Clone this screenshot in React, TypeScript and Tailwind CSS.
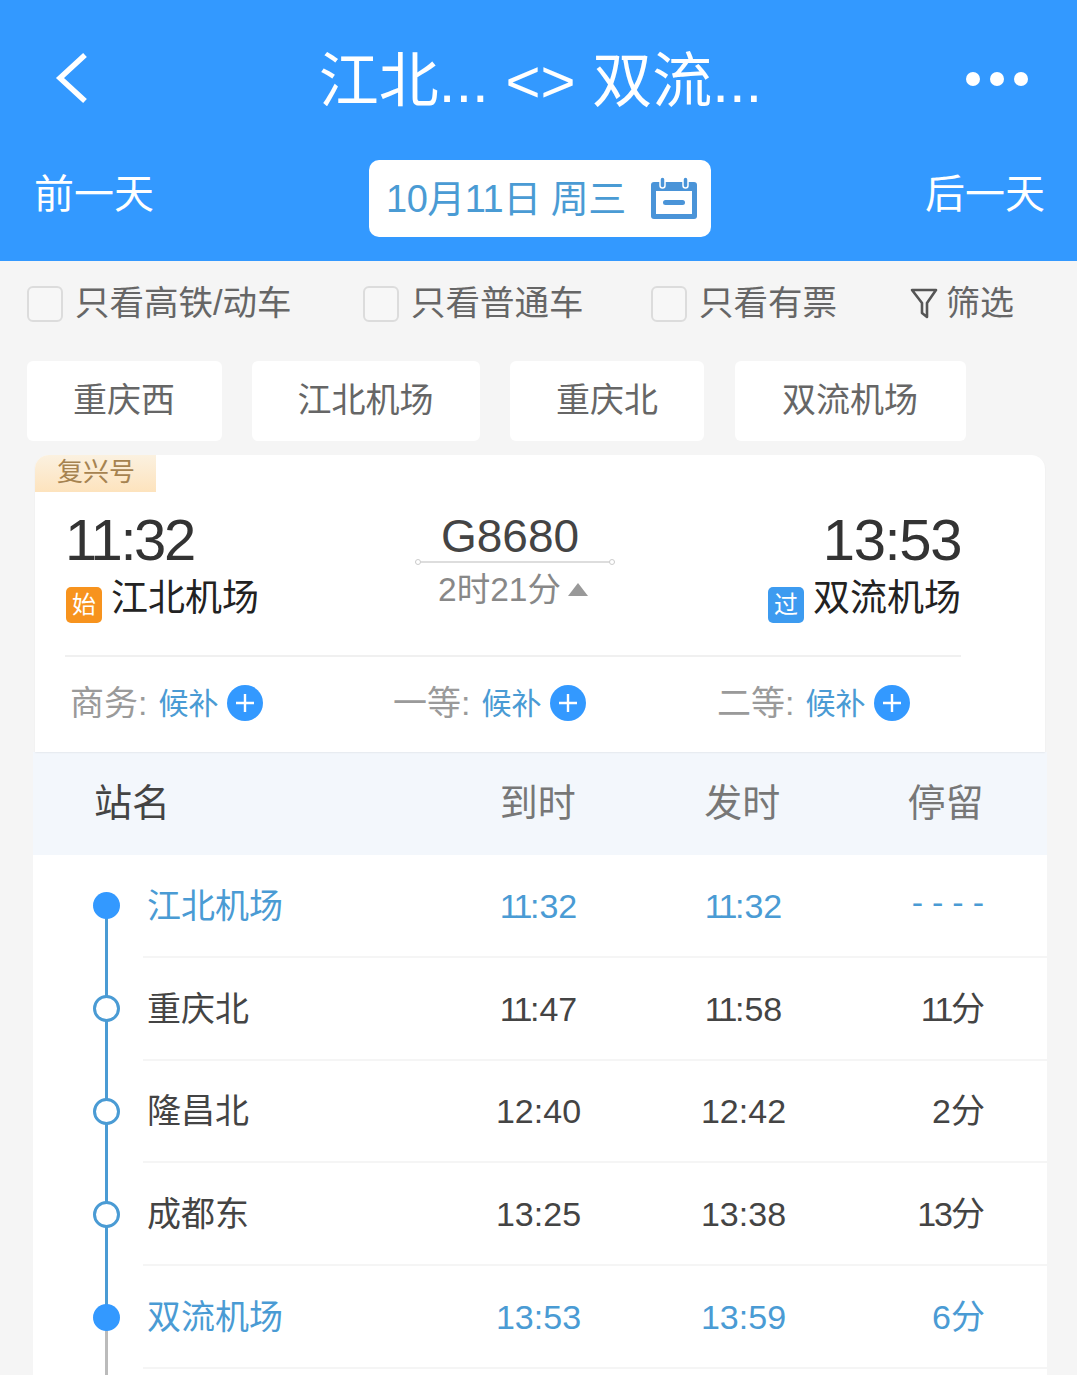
import React from "react";

const FONT = '"Liberation Sans", "Noto Sans CJK SC", sans-serif';

function Check({ label, className }: { label: string; className: string }) {
  return (
    <div className={`flex items-center gap-[12px] ${className}`}>
      <span className="w-[36px] h-[36px] rounded-[6px] border-2 border-[#dcdcdc] bg-[#f7f7f7]" />
      <span>{label}</span>
    </div>
  );
}

function Seat({ label, className }: { label: string; className: string }) {
  return (
    <div className={`flex items-center ${className}`}>
      <span className="text-[#9a9a9a]">{label}:</span>
      <span className="text-[#4a9bd4] text-[30px] ml-[11px]">候补</span>
      <span className="ml-[9px] w-[36px] h-[36px] rounded-full bg-[#3399ff] flex items-center justify-center">
        <svg width="20" height="20" viewBox="0 0 20 20" fill="none" stroke="#ffffff" strokeWidth="2.4">
          <path d="M10 1v18M1 10h18" />
        </svg>
      </span>
    </div>
  );
}

function Num({ v }: { v: string }) {
  if (v.startsWith("11")) {
    return (
      <>
        <span className="tracking-[-2.5px]">11</span>
        {v.slice(2)}
      </>
    );
  }
  if (v === "13分") {
    return (
      <>
        <span className="tracking-[-2px]">13</span>分
      </>
    );
  }
  return <>{v}</>;
}

const rows = [
  { name: "江北机场", a: "11:32", d: "11:32", s: "----", hi: true, filled: true },
  { name: "重庆北", a: "11:47", d: "11:58", s: "11分", hi: false, filled: false },
  { name: "隆昌北", a: "12:40", d: "12:42", s: "2分", hi: false, filled: false },
  { name: "成都东", a: "13:25", d: "13:38", s: "13分", hi: false, filled: false },
  { name: "双流机场", a: "13:53", d: "13:59", s: "6分", hi: true, filled: true },
];

export default function App() {
  return (
    <div className="w-[1077px] h-[1375px] overflow-hidden bg-[#f5f5f5]" style={{ fontFamily: FONT }}>
      {/* header */}
      <header className="h-[261px] bg-[#3399ff] text-white flex flex-col">
        <div className="h-[160px] flex items-center relative justify-center">
          <svg className="absolute left-[54px] top-[52px]" width="34" height="52" viewBox="0 0 34 52" fill="none" stroke="#ffffff" strokeWidth="5.5" strokeLinejoin="miter">
            <path d="M31 3 6 26l25 23" />
          </svg>
          <h1 className="text-[60px] font-normal leading-none pt-[4px] pl-[4px]">江北... &lt;&gt; 双流...</h1>
          <div className="absolute left-[966px] top-[72px] flex gap-[10px]">
            <span className="w-[14px] h-[14px] rounded-full bg-white" />
            <span className="w-[14px] h-[14px] rounded-full bg-white" />
            <span className="w-[14px] h-[14px] rounded-full bg-white" />
          </div>
        </div>
        <div className="flex items-start justify-between pl-[34px] pr-[32px]">
          <span className="text-[40px] leading-none mt-[14px]">前一天</span>
          <div className="w-[342px] h-[77px] rounded-[10px] bg-white flex items-center pl-[17px] mr-[-1px] text-[#4a9bd4] text-[38px]">
            <span className="whitespace-nowrap tracking-[-0.5px] mt-[1px]">10月11日 周三</span>
            <svg className="ml-[25px] mb-[2px]" width="46" height="44" viewBox="0 0 46 44" fill="none">
              <rect x="0" y="6" width="46" height="37" rx="3" fill="#4a94d8" />
              <rect x="5" y="15" width="36" height="23" fill="#ffffff" />
              <rect x="12" y="24" width="22" height="5" rx="2.5" fill="#4a94d8" />
              <rect x="9" y="1" width="5" height="11" rx="2.5" fill="#4a94d8" stroke="#ffffff" strokeWidth="1.5" />
              <rect x="32" y="1" width="5" height="11" rx="2.5" fill="#4a94d8" stroke="#ffffff" strokeWidth="1.5" />
            </svg>
          </div>
          <span className="text-[40px] leading-none mt-[14px]">后一天</span>
        </div>
      </header>

      {/* filters */}
      <div className="h-[84px] flex items-center pl-[27px] text-[34.5px] text-[#666666] pt-[1px]">
        <Check label="只看高铁/动车" className="w-[336px]" />
        <Check label="只看普通车" className="w-[288px]" />
        <Check label="只看有票" className="w-[259px]" />
        <div className="flex items-center gap-[8px] text-[34px]">
          <svg width="28" height="34" viewBox="0 0 28 34" fill="none" stroke="#555555" strokeWidth="2.6" strokeLinejoin="round">
            <path d="M2 3h24L17 16v14l-5-4V16z" />
          </svg>
          <span>筛选</span>
        </div>
      </div>

      {/* chips */}
      <div className="flex pl-[27px] mt-[16px] h-[80px] text-[34px] text-[#666666]">
        <div className="w-[195px] pb-[2px] pr-[1px] bg-white rounded-[6px] flex items-center justify-center">重庆西</div>
        <div className="w-[228px] pb-[2px] pr-[1px] ml-[30px] bg-white rounded-[6px] flex items-center justify-center">江北机场</div>
        <div className="w-[194px] pb-[2px] ml-[30px] bg-white rounded-[6px] flex items-center justify-center">重庆北</div>
        <div className="w-[231px] pb-[2px] pr-[1px] ml-[31px] bg-white rounded-[6px] flex items-center justify-center">双流机场</div>
      </div>

      {/* train card */}
      <section className="mt-[14px] ml-[35px] w-[1010px] h-[297px] bg-white rounded-t-[14px] relative overflow-hidden shadow-[0_1px_2px_rgba(0,0,0,0.06)]">
        <div className="absolute left-0 top-0 w-[121px] h-[37px] bg-gradient-to-b from-[#fbf1e0] to-[#fde3bd] text-[#a68350] text-[26px] leading-[35px] pl-[22px]">复兴号</div>
        <div className="pt-[53px] px-[30px] h-[202px]">
          <div className="flex justify-between items-start h-[149px] border-b-2 border-[#f0f0f0] w-[896px]">
            <div>
              <div className="text-[58px] leading-[64px] tracking-[-2.4px] text-[#333333]">11:32</div>
              <div className="flex items-center mt-[2px]">
                <span className="w-[36px] h-[36px] ml-[1px] mt-[12px] rounded-[5px] bg-[#f7931e] text-white text-[24px] flex items-center justify-center">始</span>
                <span className="ml-[9px] text-[37px] leading-[50px] text-[#222222]">江北机场</span>
              </div>
            </div>
            <div className="w-[200px] ml-[3px] flex flex-col items-center">
              <div className="text-[46px] leading-[49px] text-[#444444] mt-[4px] mr-[10px]">G8680</div>
              <div className="w-[200px] h-[2px] bg-[#dddddd] relative">
                <span className="absolute left-0 top-[-2px] w-[6px] h-[6px] rounded-full border border-[#cccccc] bg-white" />
                <span className="absolute right-0 top-[-2px] w-[6px] h-[6px] rounded-full border border-[#cccccc] bg-white" />
              </div>
              <div className="flex items-center text-[33.5px] leading-[52px] text-[#888888] mt-[1px] mr-[4px]">
                <span>2时21分</span>
                <span className="ml-[7px] mb-[2px] w-0 h-0 border-l-[10px] border-r-[10px] border-b-[13px] border-l-transparent border-r-transparent border-b-[#999999]" />
              </div>
            </div>
            <div className="flex flex-col items-end">
              <div className="text-[58px] leading-[64px] tracking-[-1.4px] text-[#333333]">13:53</div>
              <div className="flex items-center mt-[2px]">
                <span className="w-[36px] h-[36px] mt-[12px] rounded-[5px] bg-[#3d9bf0] text-white text-[24px] flex items-center justify-center">过</span>
                <span className="ml-[9px] text-[37px] leading-[50px] text-[#222222]">双流机场</span>
              </div>
            </div>
          </div>
        </div>
        <div className="flex items-center h-[92px] text-[34px]">
          <Seat label="商务" className="ml-[35px] w-[323px]" />
          <Seat label="一等" className="w-[324px]" />
          <Seat label="二等" className="" />
        </div>
      </section>

      {/* table */}
      <section className="ml-[33px] w-[1014px]">
        <div className="h-[103px] bg-[#f3f7fc] flex items-center text-[38px] text-[#777777]">
          <div className="w-[406px] pl-[61px] text-[#444444]">站名</div>
          <div className="w-[207px] text-center">到时</div>
          <div className="w-[206px] text-center">发时</div>
          <div className="w-[205px] text-center">停留</div>
        </div>
        <div className="bg-white">
          {rows.map((r, i) => (
            <div key={r.name} className="h-[102.8px] flex relative">
              <div className="w-[110px] shrink-0 relative flex items-center">
                <span
                  className={`absolute left-[72px] w-[3px] ${i === 0 ? "top-1/2" : "top-0"} ${i === 4 ? "bottom-1/2" : "bottom-0"} bg-[#4a9bd4]`}
                />
                {i === 4 && <span className="absolute left-[72px] w-[3px] top-1/2 bottom-0 bg-[#bbbbbb]" />}
                <span
                  className={`relative ml-[60px] w-[27px] h-[27px] rounded-full mb-[1px] ${
                    r.filled ? "bg-[#3399ff]" : "bg-white border-[3px] border-[#4a9bd4]"
                  }`}
                />
              </div>
              <div
                className={`flex-1 flex items-center border-b-2 border-[#f5f5f5] pt-[2px] text-[34px] ${
                  r.hi ? "text-[#4a9bd4]" : "text-[#444444]"
                }`}
              >
                <div className="w-[293px] pl-[4px]">{r.name}</div>
                <div className="w-[205px] text-center"><Num v={r.a} /></div>
                <div className="w-[205px] text-center"><Num v={r.d} /></div>
                {r.s === "----" ? (
                  <div className="w-[139px] text-right tracking-[9px] ml-[8px] mb-[8px]">{r.s}</div>
                ) : (
                  <div className="w-[139px] text-right"><Num v={r.s} /></div>
                )}
              </div>
            </div>
          ))}
          <div className="h-[40px] flex">
            <div className="w-[110px] relative">
              <span className="absolute left-[72px] w-[3px] top-0 bottom-0 bg-[#bbbbbb]" />
            </div>
          </div>
        </div>
      </section>
    </div>
  );
}
